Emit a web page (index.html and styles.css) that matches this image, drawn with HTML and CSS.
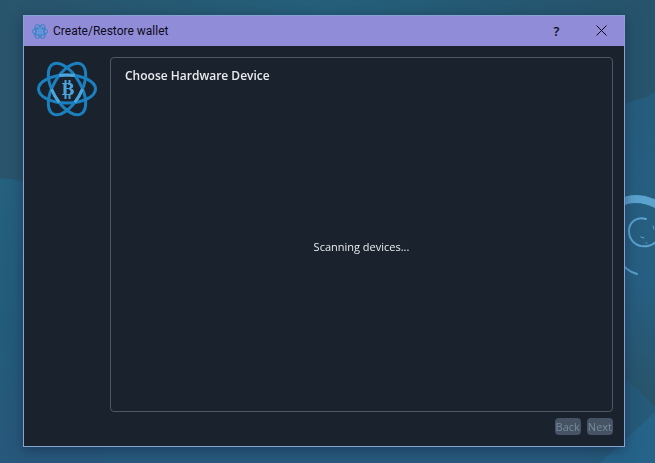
FILE: index.html
```html
<!DOCTYPE html>
<html lang="en">
  <head>
    <meta charset="UTF-8" />
    <meta name="viewport" content="width=device-width, initial-scale=1.0" />
    <title>Create/Restore wallet</title>
    <link rel="stylesheet" href="styles.css">
  </head>
  <body>
    <svg class="wallpaper" viewBox="0 0 655 463" preserveAspectRatio="xMaxYMid slice" aria-hidden="true">
      <defs>
        <linearGradient id="sky" x1="0" y1="0" x2="1" y2="0">
          <stop offset="0" stop-color="#29546c" />
          <stop offset="0.5" stop-color="#25607b" />
          <stop offset="1" stop-color="#27536c" />
        </linearGradient>
        <linearGradient id="wave" x1="0" y1="0" x2="0" y2="1">
          <stop offset="0" stop-color="#25607f" />
          <stop offset="0.5" stop-color="#235b7a" />
          <stop offset="1" stop-color="#28587c" />
        </linearGradient>
        <linearGradient id="fold" x1="0" y1="95" x2="0" y2="405" gradientUnits="userSpaceOnUse">
          <stop offset="0" stop-color="#265d7d" />
          <stop offset="0.6" stop-color="#275f82" />
          <stop offset="1" stop-color="#28536a" />
        </linearGradient>
      </defs>
      <rect width="655" height="463" fill="url(#sky)" />
      <path d="M0 178Q60 182 110 230L520 463H0Z" fill="url(#wave)" />
      <path d="M100 463V440H600L655 400V463Z" fill="#265a7c" />
      <path d="M655 92Q640 103 600 106V463H655Z" fill="url(#fold)" />
      <path d="M600 362Q635 382 655 408V463H590Z" fill="#265a79" />
      <path d="M655 412L600 463H655Z" fill="#266389" />
      <g fill="none" stroke="#5ba3cf" stroke-linecap="round">
        <path d="M618 204Q636 193 660 206" stroke-width="8" />
        <path d="M646 219C637 216 629 222 629 231C629 241 637 248 648 246Q653 245 657 241" stroke-width="2" />
        <path d="M620 261Q626 271 637 274" stroke-width="2" />
        <path d="M641 237L644 238M653 226L654 229M646 243L647 243" stroke-width="1" />
      </g>
    </svg>

    <svg class="symbols" aria-hidden="true">
      <symbol id="atom" viewBox="0 0 60 64">
        <g fill="none" stroke="#1b80bf" stroke-width="3">
          <ellipse cx="30" cy="32" rx="28.5" ry="14" />
          <ellipse cx="30" cy="32" rx="28.5" ry="14" transform="rotate(60 30 32)" />
          <ellipse cx="30" cy="32" rx="28.5" ry="14" transform="rotate(-60 30 32)" />
        </g>
        <g fill="none" stroke="#4fa5da" stroke-width="3">
          <path d="M22.2 18.6A28.5 14 0 0 1 37.8 18.6" />
          <path d="M14.5 32A28.5 14 60 0 0 22.2 45.4" />
          <path d="M45.5 32A28.5 14 -60 0 1 37.8 45.4" />
        </g>
      </symbol>
    </svg>

    <main class="window">
      <header class="titlebar">
        <svg class="app-icon" viewBox="0 0 60 64" aria-hidden="true">
          <use href="#atom" />
          <path d="M25 24H33Q38 28 33 32Q39 36 33 40H25ZM25 32H33" fill="none" stroke="#3f9bdb" stroke-width="4" />
        </svg>
        <h1 class="title">Create/Restore wallet</h1>
        <button class="caption-button" type="button" aria-label="Help">?</button>
        <button class="caption-button" type="button" aria-label="Close">
          <svg class="close-icon" viewBox="0 0 11 11">
            <path d="M0.5 0.5L10.5 10.5M10.5 0.5L0.5 10.5" stroke="#0b0b18" stroke-width="1" />
          </svg>
        </button>
      </header>
      <div class="content">
        <svg class="logo" viewBox="0 0 60 64" aria-hidden="true">
          <use href="#atom" />
          <path d="M28.5 23V28M32.5 23V28M28.5 37V42M32.5 37V42" stroke="#4ba3dc" stroke-width="2" />
          <text class="coin" x="31" y="38" text-anchor="middle">B</text>
        </svg>
        <section class="panel">
          <h2 class="heading">Choose Hardware Device</h2>
          <p class="status" role="status">Scanning devices...</p>
        </section>
      </div>
      <footer class="footer">
        <button class="nav-button" type="button" disabled>Back</button>
        <button class="nav-button" type="button" disabled>Next</button>
      </footer>
    </main>
  </body>
</html>
```
FILE: styles.css
```css
:root {
  --bg: #1a232d;
  --line: #4a5965;
  --accent: #918cd8;
  --border: #86a3d4;
}

* {
  box-sizing: border-box;
}

body {
  margin: 0;
  min-height: 100vh;
  padding: 15px 30px 16px 23px;
  display: flex;
  background-color: #27556f;
  color: #e8ecee;
  font-family: "Open Sans", "Noto Sans", sans-serif;
  font-size: 11px;
}

h1,
h2,
p {
  margin: 0;
}

button {
  border: 0;
  padding: 0;
  font-family: inherit;
}

.wallpaper {
  position: fixed;
  top: 0;
  left: 0;
  width: 100%;
  height: 100%;
  z-index: -1;
}

.symbols {
  position: absolute;
  width: 0;
  height: 0;
}

.coin {
  fill: #4ba3dc;
  font-family: "DejaVu Serif", serif;
  font-size: 16px;
  font-weight: bold;
}

.window {
  flex: 1;
  display: flex;
  flex-direction: column;
  background-color: var(--bg);
  border: 1px solid var(--border);
  box-shadow: 0 3px 12px rgba(20, 30, 60, 0.5);
}

.titlebar {
  display: flex;
  align-items: center;
  height: 30px;
  padding-left: 8px;
  background-color: var(--accent);
  color: #0b0b18;
}

.app-icon {
  width: 16px;
  height: 17px;
}

.title {
  flex: 1;
  padding-left: 5px;
  font-family: Roboto, sans-serif;
  font-size: 12px;
  font-weight: normal;
}

.caption-button {
  width: 45px;
  height: 30px;
  background: none;
  color: inherit;
  font-size: 13px;
  font-weight: 600;
}

.close-icon {
  width: 11px;
  height: 11px;
}

.content {
  flex: 1;
  display: flex;
  gap: 13px;
  padding: 11px 11px 0 13px;
}

.logo {
  width: 60px;
  height: 64px;
}

.panel {
  flex: 1;
  display: flex;
  flex-direction: column;
  gap: 8px;
  padding: 10px 14px;
  border: 1px solid var(--line);
  border-radius: 4px;
}

.heading {
  font-size: 12px;
  font-weight: 600;
  line-height: 16px;
}

.status {
  flex: 1;
  display: flex;
  align-items: center;
  justify-content: center;
}

.footer {
  display: flex;
  justify-content: flex-end;
  gap: 6px;
  padding: 6px 11px 11px;
}

.nav-button {
  height: 17px;
  padding: 0 1px;
  border-radius: 4px;
  background-color: #455364;
  color: #788a9c;
  font-size: 11px;
  line-height: 17px;
}
```
